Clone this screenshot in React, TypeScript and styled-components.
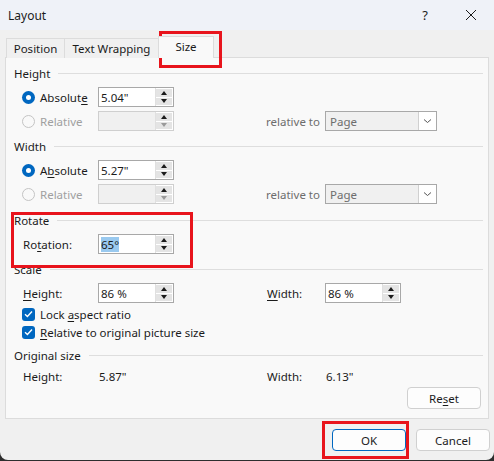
import styled, { createGlobalStyle, css } from "styled-components";

const GlobalStyle = createGlobalStyle`
	html, body {
		margin: 0;
		padding: 0;
		background: #2d2d2d;
	}
	body {
		font-family: "Noto Sans", "Open Sans", sans-serif;
		font-size: 11.5px;
		color: #1b1b1b;
	}
`;

const Window = styled.div`
	position: relative;
	width: 494px;
	height: 460px;
	background: #f0f0f0;
	border-radius: 0 0 8px 8px;
	overflow: hidden;
	display: flex;
	flex-direction: column;
`;

const TitleBar = styled.div`
	height: 30px;
	flex: none;
	display: flex;
	align-items: center;
	background: #eff2f8;
	padding-left: 8px;
	font-size: 12px;
`;

const Title = styled.div`
	flex: 1;
`;

const TitleButton = styled.div`
	width: 46px;
	height: 30px;
	display: flex;
	align-items: center;
	justify-content: center;
	font-size: 13px;
`;

const Body = styled.div`
	flex: 1;
	padding: 0 5px 0 5px;
	display: flex;
	flex-direction: column;
`;

const TabStrip = styled.div`
	height: 28px;
	display: flex;
	align-items: flex-end;
	padding-left: 1px;
	margin-bottom: -1px;
	position: relative;
	z-index: 1;
`;

const Tab = styled.div<{ $active?: boolean; $w: number }>`
	width: ${(p) => p.$w}px;
	box-sizing: border-box;
	height: 20px;
	display: flex;
	align-items: center;
	justify-content: center;
	border: 1px solid #dcdcdc;
	border-bottom: none;
	background: #f0f0f0;
	margin-right: -1px;
	${(p) =>
		p.$active &&
		css`
			height: 22px;
			background: #f9f9f9;
			padding-bottom: 2px;
		`}
`;

const Panel = styled.div`
	height: 362px;
	box-sizing: border-box;
	background: #f9f9f9;
	border: 1px solid #dcdcdc;
	padding: 5px 0 0 0;
	display: flex;
	flex-direction: column;
`;

const Section = styled.div<{ $gap?: number }>`
	margin-top: ${(p) => p.$gap ?? 3}px;
`;

const Header = styled.div`
	height: 20px;
	display: flex;
	align-items: center;
	padding-left: 8px;
	margin-bottom: 2px;
	&::after {
		content: "";
		flex: 1;
		height: 1px;
		background: #dedede;
		margin-left: 8px;
		margin-right: 5px;
	}
`;

const Row = styled.div<{ $h?: number }>`
	height: ${(p) => p.$h ?? 24}px;
	display: grid;
	grid-template-columns: 76px 76px 92px 59px 112px;
	align-items: center;
	padding-left: 16px;
`;

const Option = styled.div<{ $disabled?: boolean }>`
	display: flex;
	align-items: center;
	gap: 5px;
	color: ${(p) => (p.$disabled ? "#a0a0a0" : "inherit")};
`;

const RadioDot = styled.span<{ $on?: boolean }>`
	width: 13px;
	height: 13px;
	box-sizing: border-box;
	border-radius: 50%;
	${(p) =>
		p.$on
			? css`
					background: #0067c0;
					display: flex;
					align-items: center;
					justify-content: center;
					&::after {
						content: "";
						width: 5px;
						height: 5px;
						border-radius: 50%;
						background: #fff;
					}
			  `
			: css`
					border: 1px solid #c4c4c4;
					background: #f9f9f9;
			  `}
`;

const CheckBox = styled.span`
	width: 13px;
	height: 13px;
	border-radius: 3px;
	background: #0067c0;
	display: flex;
	align-items: center;
	justify-content: center;
`;

const Label = styled.span<{ $muted?: boolean }>`
	padding-left: ${(p) => (p.$muted ? 0 : 1)}px;
	color: ${(p) => (p.$muted ? "#6d6d6d" : "inherit")};
`;

const SpinBox = styled.div<{ $disabled?: boolean }>`
	width: 76px;
	height: 20px;
	box-sizing: border-box;
	border: 1px solid ${(p) => (p.$disabled ? "#cfcfcf" : "#a8a8a8")};
	display: flex;
	background: ${(p) => (p.$disabled ? "#f0f0f0" : "#fff")};
`;

const SpinText = styled.div`
	flex: 1;
	display: flex;
	align-items: center;
	padding-left: 2px;
`;

const Selected = styled.span`
	background: #99c9ef;
`;

const SpinButtons = styled.div`
	width: 16px;
	display: flex;
	flex-direction: column;
	border-left: 1px solid #e0e0e0;
	background: #fff;
	padding: 1px 1px 1px 0;
	gap: 1px;
`;

const SpinBtn = styled.div<{ $down?: boolean; $disabled?: boolean }>`
	flex: 1;
	background: #e4e4e4;
	display: flex;
	align-items: center;
	justify-content: center;
	&::after {
		content: "";
		border-left: 3.5px solid transparent;
		border-right: 3.5px solid transparent;
		${(p) =>
			p.$down
				? css`
						border-top: 4px solid ${p.$disabled ? "#9a9a9a" : "#1b1b1b"};
				  `
				: css`
						border-bottom: 4px solid #1b1b1b;
				  `}
	}
`;

const Dropdown = styled.div`
	width: 112px;
	height: 20px;
	box-sizing: border-box;
	border: 1px solid #a8a8a8;
	background: #f0f0f0;
	display: flex;
	color: #6d6d6d;
`;

const DropText = styled.div`
	flex: 1;
	display: flex;
	align-items: center;
	padding-left: 4px;
`;

const DropArrow = styled.div`
	width: 17px;
	background: #fff;
	border-left: 1px solid #d0d0d0;
	display: flex;
	align-items: center;
	justify-content: center;
`;

const ResetRow = styled.div`
	margin-top: auto;
	display: flex;
	justify-content: flex-end;
	padding: 0 7px 9px 0;
`;

const Button = styled.button<{ $primary?: boolean }>`
	width: 74px;
	height: 22px;
	box-sizing: border-box;
	font: inherit;
	color: #1b1b1b;
	background: #fdfdfd;
	border: 1px solid ${(p) => (p.$primary ? "#0067c0" : "#d0d0d0")};
	border-radius: 4px;
	padding: 0;
`;

const Footer = styled.div`
	flex: 1;
	display: flex;
	justify-content: flex-end;
	align-items: flex-start;
	gap: 10px;
	padding: 10px 4px 0 0;
	margin-right: -5px;
`;

const Mark = styled.div<{ $x: number; $y: number; $w: number; $h: number }>`
	position: absolute;
	left: ${(p) => p.$x}px;
	top: ${(p) => p.$y}px;
	width: ${(p) => p.$w}px;
	height: ${(p) => p.$h}px;
	box-sizing: border-box;
	border: 3px solid #e8141c;
	pointer-events: none;
`;

const U = styled.span`
	text-decoration: underline;
	text-underline-offset: 2px;
`;

function Spin({ value, disabled }: { value?: React.ReactNode; disabled?: boolean }) {
	return (
		<SpinBox $disabled={disabled}>
			<SpinText>{value}</SpinText>
			<SpinButtons>
				<SpinBtn />
				<SpinBtn $down $disabled={disabled} />
			</SpinButtons>
		</SpinBox>
	);
}

function Select() {
	return (
		<Dropdown>
			<DropText>Page</DropText>
			<DropArrow>
				<svg width="9" height="6" viewBox="0 0 9 6">
					<path d="M1 1.5 L4.5 4.5 L8 1.5" stroke="#555" strokeWidth="1" fill="none" />
				</svg>
			</DropArrow>
		</Dropdown>
	);
}

const Check = () => (
	<CheckBox>
		<svg width="9" height="8" viewBox="0 0 9 8">
			<path d="M1 4.2 L3.4 6.4 L8 1.5" stroke="#fff" strokeWidth="1.4" fill="none" />
		</svg>
	</CheckBox>
);

export default function App() {
	return (
		<>
			<GlobalStyle />
			<Window>
				<TitleBar>
					<Title>Layout</Title>
					<TitleButton>?</TitleButton>
					<TitleButton>
						<svg width="12" height="12" viewBox="0 0 12 12">
							<path d="M1 1 L11 11 M11 1 L1 11" stroke="#1b1b1b" strokeWidth="1" />
						</svg>
					</TitleButton>
				</TitleBar>
				<Body>
					<TabStrip>
						<Tab $w={59}>Position</Tab>
						<Tab $w={95}>Text Wrapping</Tab>
						<Tab $w={56} $active>
							Size
						</Tab>
					</TabStrip>
					<Panel>
						<Section $gap={0}>
							<Header>Height</Header>
							<Row>
								<Option>
									<RadioDot $on />
									<span>
										Absolut<U>e</U>
									</span>
								</Option>
								<Spin value={'5.04"'} />
							</Row>
							<Row>
								<Option $disabled>
									<RadioDot />
									<span>Relative</span>
								</Option>
								<Spin disabled />
								<span />
								<Label $muted>relative to</Label>
								<Select />
							</Row>
						</Section>
						<Section>
							<Header>Width</Header>
							<Row>
								<Option>
									<RadioDot $on />
									<span>
										A<U>b</U>solute
									</span>
								</Option>
								<Spin value={'5.27"'} />
							</Row>
							<Row>
								<Option $disabled>
									<RadioDot />
									<span>Relative</span>
								</Option>
								<Spin disabled />
								<span />
								<Label $muted>relative to</Label>
								<Select />
							</Row>
						</Section>
						<Section $gap={4}>
							<Header>Rotate</Header>
							<Row>
								<Label>
									Ro<U>t</U>ation:
								</Label>
								<Spin value={<Selected>65°</Selected>} />
							</Row>
						</Section>
						<Section>
							<Header>Scale</Header>
							<Row>
								<Label>
									<U>H</U>eight:
								</Label>
								<Spin value="86 %" />
								<span />
								<Label>
									<U>W</U>idth:
								</Label>
								<Spin value="86 %" />
							</Row>
							<Row $h={18}>
								<Option style={{ gridColumn: "1 / 4" }}>
									<Check />
									<span>
										Lock <U>a</U>spect ratio
									</span>
								</Option>
							</Row>
							<Row $h={18}>
								<Option style={{ gridColumn: "1 / 4" }}>
									<Check />
									<span>
										<U>R</U>elative to original picture size
									</span>
								</Option>
							</Row>
						</Section>
						<Section $gap={4}>
							<Header>Original size</Header>
							<Row $h={18}>
								<Label>Height:</Label>
								<Label>5.87"</Label>
								<span />
								<Label>Width:</Label>
								<Label>6.13"</Label>
							</Row>
						</Section>
						<ResetRow>
							<Button>
								Re<U>s</U>et
							</Button>
						</ResetRow>
					</Panel>
					<Footer>
						<Button $primary>OK</Button>
						<Button>Cancel</Button>
					</Footer>
				</Body>
				<Mark $x={159} $y={31} $w={63} $h={37} />
				<Mark $x={11} $y={212} $w={182} $h={56} />
				<Mark $x={322} $y={421} $w={87} $h={38} />
			</Window>
		</>
	);
}
